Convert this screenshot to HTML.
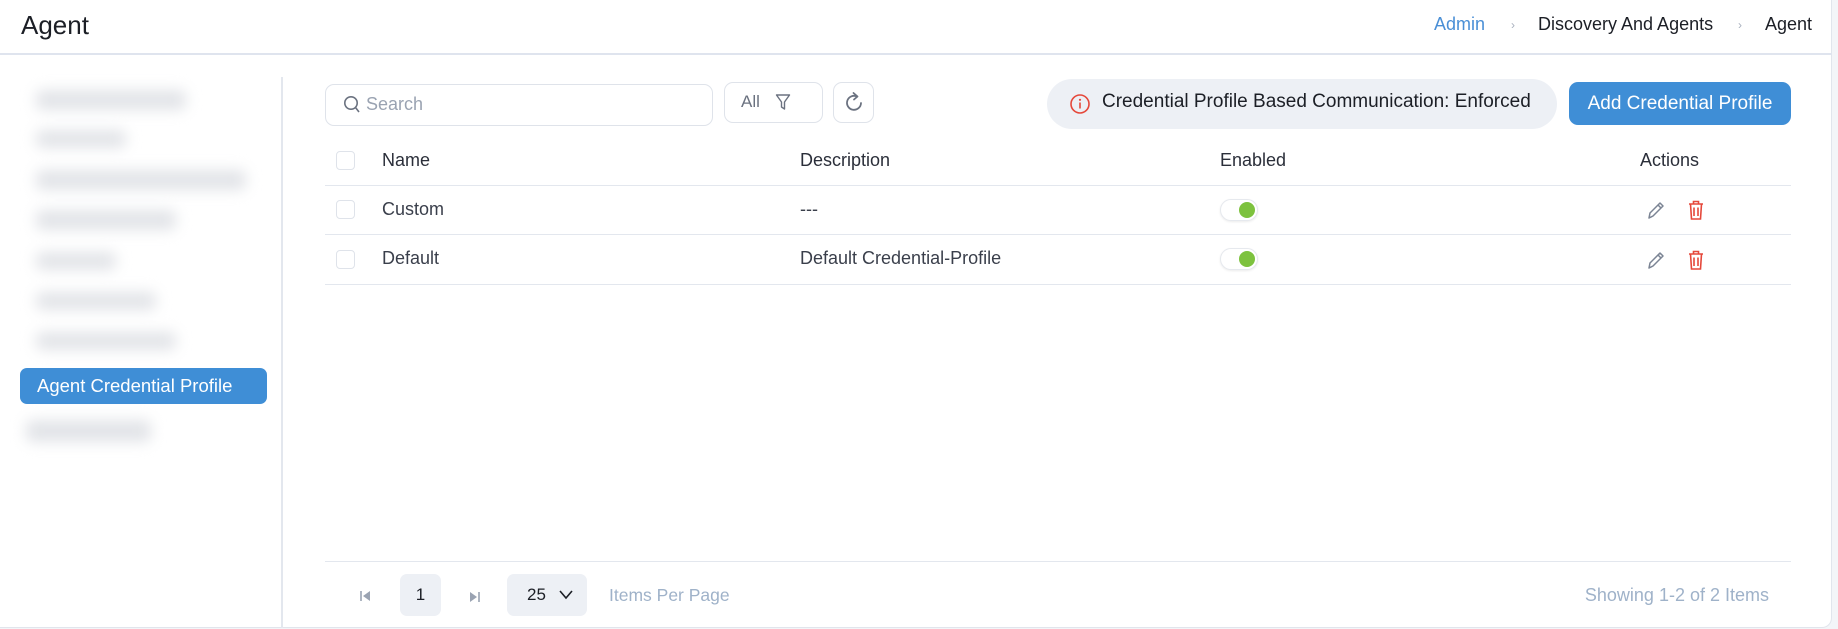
<!DOCTYPE html>
<html><head><meta charset="utf-8"><style>
*{box-sizing:border-box;margin:0;padding:0}
body{width:1838px;height:629px;background:#f3f5f8;font-family:"Liberation Sans",sans-serif;position:relative;overflow:hidden;color:#2b2f3a}
.card{position:absolute;left:0;top:0;width:1832px;height:628px;background:#fff;border-radius:0 0 10px 0;border-right:1px solid #e1e5ec;border-bottom:1px solid #e1e5ec}
.a{position:absolute;white-space:nowrap}
.hdr{position:absolute;left:0;top:53px;width:1832px;height:2px;background:#dfe4ee}
.blur{position:absolute;background:#e2e4e8;filter:blur(7px);border-radius:6px}
.cb{position:absolute;width:19px;height:19px;border:1px solid #dfe3ea;border-radius:4px;background:#fff}
.line{position:absolute;left:325px;width:1466px;height:1px;background:#e3e7ee}
.tog{position:absolute;width:38px;height:22px;border-radius:11px;border:1px solid #e6e9ee;background:#fff;box-shadow:0 1px 2px rgba(0,0,0,.08)}
.tog::after{content:"";position:absolute;right:2px;top:2px;width:16px;height:16px;border-radius:50%;background:#7dc23e}
.th{font-size:18px;color:#2b2f3a;top:150px}
.td{font-size:18px;color:#3a3f4b}
</style></head><body>
<div class="card"></div>
<div class="a" style="left:21px;top:10px;font-size:26px;color:#1c1f26">Agent</div>
<div class="a" style="left:1434px;top:14px;font-size:18px;color:#4a8fd6">Admin</div>
<div class="a" style="left:1511px;top:18px;font-size:12px;color:#a8b0be">›</div>
<div class="a" style="left:1538px;top:14px;font-size:18px;color:#1c1f26">Discovery And Agents</div>
<div class="a" style="left:1738px;top:18px;font-size:12px;color:#a8b0be">›</div>
<div class="a" style="left:1765px;top:14px;font-size:18px;color:#1c1f26">Agent</div>
<div class="hdr"></div>

<!-- sidebar -->
<div class="a" style="left:281px;top:77px;width:2px;height:551px;background:#e3e7ee"></div>
<div class="blur" style="left:36px;top:90px;width:150px;height:20px"></div>
<div class="blur" style="left:36px;top:130px;width:90px;height:18px"></div>
<div class="blur" style="left:36px;top:170px;width:210px;height:20px"></div>
<div class="blur" style="left:36px;top:210px;width:140px;height:20px"></div>
<div class="blur" style="left:36px;top:252px;width:80px;height:18px"></div>
<div class="blur" style="left:36px;top:292px;width:120px;height:18px"></div>
<div class="blur" style="left:36px;top:332px;width:140px;height:18px"></div>
<div class="a" style="left:20px;top:368px;width:247px;height:36px;background:#3f8ed6;border-radius:7px;color:#fff;font-size:18.5px;line-height:36px;padding-left:17px">Agent Credential Profile</div>
<div class="blur" style="left:26px;top:420px;width:125px;height:22px"></div>

<!-- toolbar -->
<div class="a" style="left:325px;top:84px;width:388px;height:42px;border:1px solid #dfe3ea;border-radius:9px"></div>
<svg class="a" style="left:343px;top:95px" width="18" height="20" viewBox="0 0 18 20"><circle cx="8" cy="8" r="6.2" fill="none" stroke="#6b7280" stroke-width="1.6"/><path d="M12.5 12.5L16 17" stroke="#6b7280" stroke-width="1.6"/></svg>
<div class="a" style="left:366px;top:94px;font-size:18px;color:#9aa3b2">Search</div>
<div class="a" style="left:724px;top:82px;width:99px;height:41px;border:1px solid #dfe3ea;border-radius:9px"></div>
<div class="a" style="left:741px;top:92px;font-size:17px;color:#6b7280">All</div>
<svg class="a" style="left:775px;top:93px" width="16" height="18" viewBox="0 0 16 18"><path d="M1.5 2h13L9.5 9v7l-3-2V9z" fill="none" stroke="#6b7280" stroke-width="1.4" stroke-linejoin="round"/></svg>
<div class="a" style="left:833px;top:82px;width:41px;height:41px;border:1px solid #dfe3ea;border-radius:9px"></div>
<svg class="a" style="left:843px;top:90px" width="22" height="24" viewBox="0 0 22 24"><path d="M14 6.5A7 7 0 1 0 18 13" fill="none" stroke="#6b7280" stroke-width="1.8" stroke-linecap="round"/><path d="M10.5 3L14.5 6.5 11 9.5" fill="none" stroke="#6b7280" stroke-width="1.8" stroke-linecap="round" stroke-linejoin="round"/></svg>

<div class="a" style="left:1047px;top:79px;width:510px;height:50px;background:#edf0f5;border-radius:25px"></div>
<svg class="a" style="left:1069px;top:93px" width="22" height="22" viewBox="0 0 22 22"><circle cx="11" cy="11" r="9" fill="none" stroke="#e5483b" stroke-width="1.6"/><circle cx="11" cy="6.8" r="1.1" fill="#e5483b"/><path d="M11 9.5v6" stroke="#e5483b" stroke-width="1.6"/></svg>
<div class="a" style="left:1102px;top:91px;font-size:19px;color:#1c1f26">Credential Profile Based Communication: Enforced</div>
<div class="a" style="left:1569px;top:82px;width:222px;height:43px;background:#3f8ed6;border-radius:9px;color:#fff;font-size:19px;line-height:43px;text-align:center">Add Credential Profile</div>

<!-- table -->
<div class="cb" style="left:336px;top:151px"></div>
<div class="a th" style="left:382px">Name</div>
<div class="a th" style="left:800px">Description</div>
<div class="a th" style="left:1220px">Enabled</div>
<div class="a th" style="left:1640px">Actions</div>
<div class="line" style="top:185px"></div>
<div class="cb" style="left:336px;top:200px"></div>
<div class="a td" style="left:382px;top:199px">Custom</div>
<div class="a td" style="left:800px;top:199px">---</div>
<div class="tog" style="left:1220px;top:199px"></div>
<div class="line" style="top:234px"></div>
<div class="cb" style="left:336px;top:250px"></div>
<div class="a td" style="left:382px;top:248px">Default</div>
<div class="a td" style="left:800px;top:248px">Default Credential-Profile</div>
<div class="tog" style="left:1220px;top:248px"></div>
<div class="line" style="top:284px"></div>

<svg class="a" style="left:1645px;top:199px" width="22" height="22" viewBox="0 0 22 22"><path d="M4 19l1-5L15 4l3 3L8 17z M13 6l3 3" fill="none" stroke="#7b8494" stroke-width="1.5" stroke-linejoin="round"/></svg>
<svg class="a" style="left:1686px;top:199px" width="20" height="22" viewBox="0 0 20 22"><path d="M3 5h14M7.5 5V2.5h5V5M4.5 5l1 15h9l1-15M8 8.5v8.5M12 8.5v8.5" fill="none" stroke="#e5483b" stroke-width="1.6"/></svg>
<svg class="a" style="left:1645px;top:249px" width="22" height="22" viewBox="0 0 22 22"><path d="M4 19l1-5L15 4l3 3L8 17z M13 6l3 3" fill="none" stroke="#7b8494" stroke-width="1.5" stroke-linejoin="round"/></svg>
<svg class="a" style="left:1686px;top:249px" width="20" height="22" viewBox="0 0 20 22"><path d="M3 5h14M7.5 5V2.5h5V5M4.5 5l1 15h9l1-15M8 8.5v8.5M12 8.5v8.5" fill="none" stroke="#e5483b" stroke-width="1.6"/></svg>

<!-- footer -->
<div class="line" style="top:561px"></div>
<svg class="a" style="left:359px;top:589px" width="14" height="14" viewBox="0 0 14 14"><path d="M2 2v10" stroke="#9aa3b2" stroke-width="1.6"/><path d="M11 2L4 7l7 5z" fill="#9aa3b2"/></svg>
<div class="a" style="left:400px;top:574px;width:41px;height:42px;background:#edf0f5;border-radius:7px;font-size:17px;line-height:42px;text-align:center;color:#1c1f26">1</div>
<svg class="a" style="left:467px;top:590px" width="14" height="14" viewBox="0 0 14 14"><path d="M3 2l7 5-7 5z" fill="#9aa3b2"/><path d="M12 2v10" stroke="#9aa3b2" stroke-width="1.6"/></svg>
<div class="a" style="left:507px;top:574px;width:80px;height:42px;background:#edf0f5;border-radius:7px"></div>
<div class="a" style="left:527px;top:585px;font-size:17px;color:#1c1f26">25</div>
<svg class="a" style="left:558px;top:588px" width="16" height="14" viewBox="0 0 16 14"><path d="M2 3l6 7 6-7" fill="none" stroke="#1c1f26" stroke-width="1.6"/></svg>
<div class="a" style="left:609px;top:585px;font-size:17.5px;color:#9fb2c9">Items Per Page</div>
<div class="a" style="right:69px;top:585px;font-size:18px;color:#9fb2c9">Showing 1-2 of 2 Items</div>
</body></html>
